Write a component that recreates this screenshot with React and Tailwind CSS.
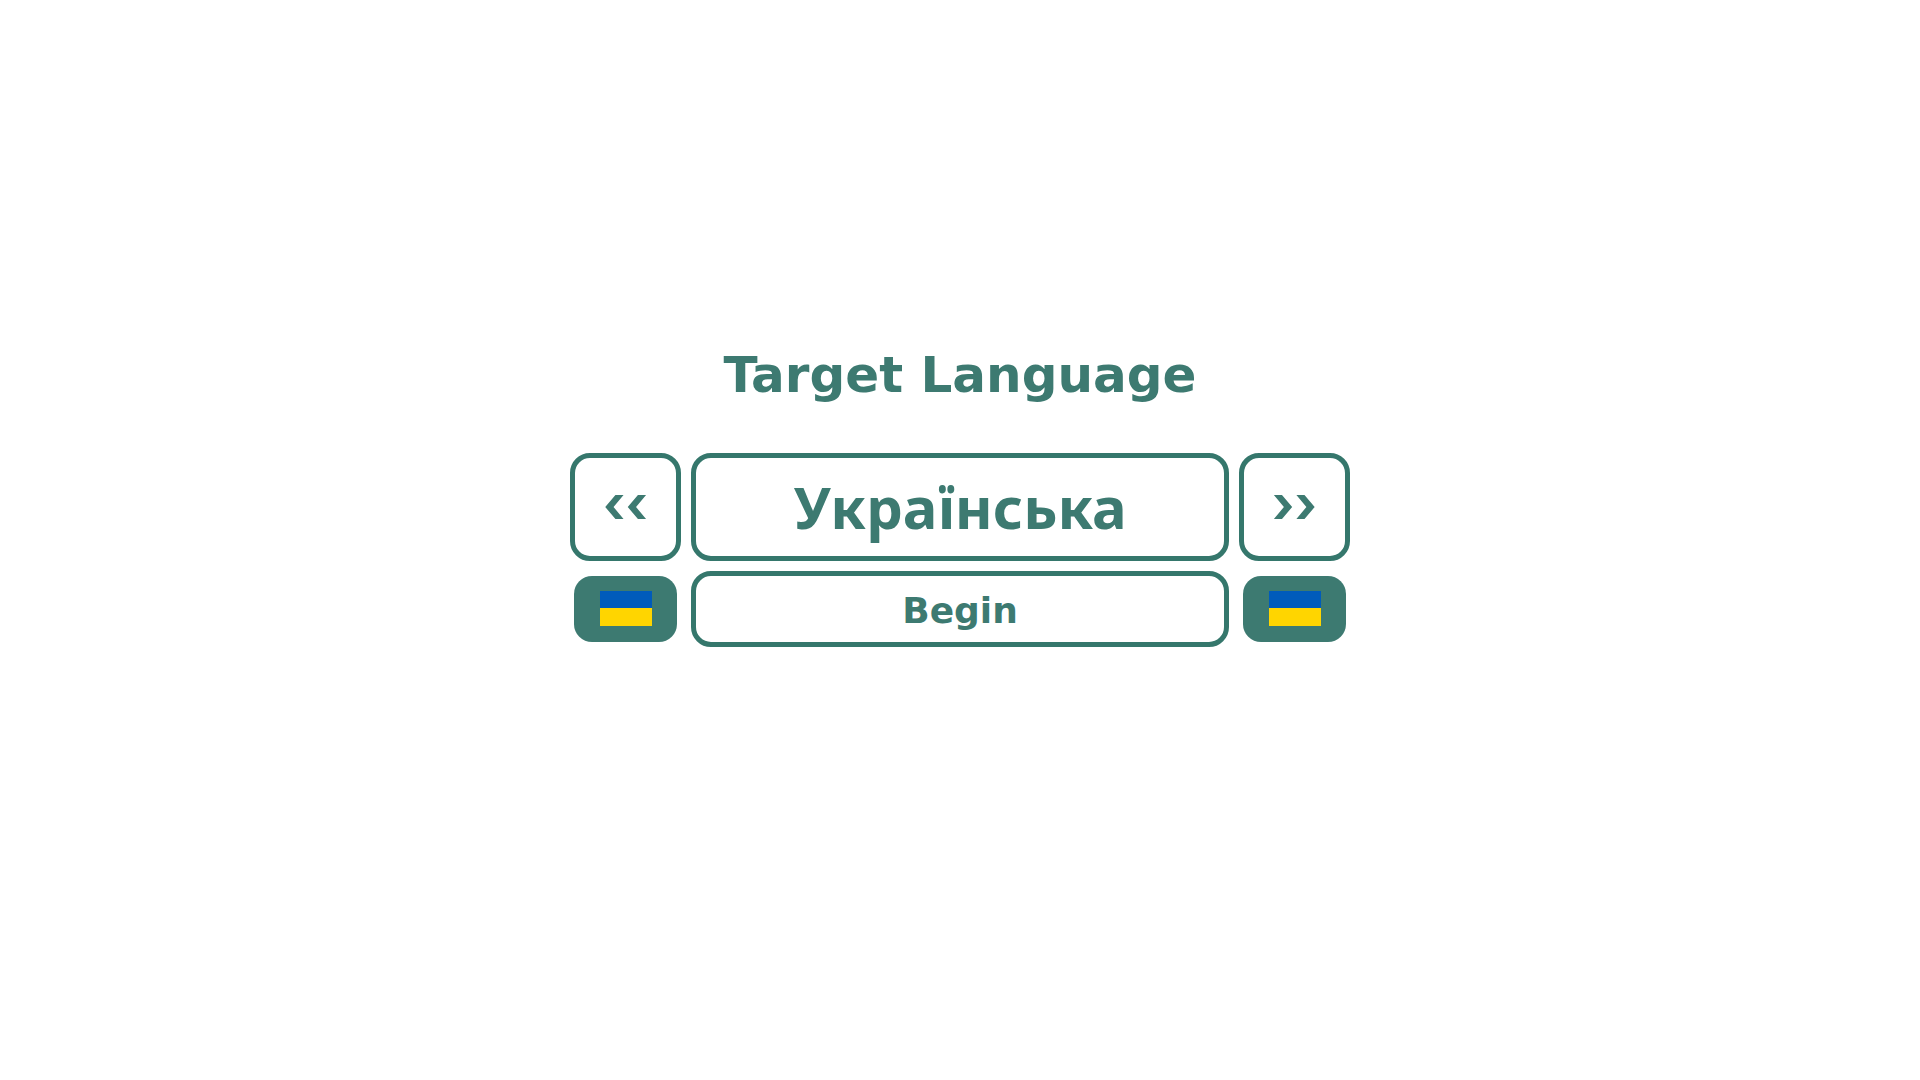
const box =
  "flex items-center justify-center rounded-[20px] border-[5px] border-[#35776c] bg-white text-[#3d7a71]";

function Flag() {
  return (
    <div className="mx-1 my-[5px] flex items-center justify-center rounded-[18px] bg-[#3d7a71] pt-[15px] pb-4">
      <svg
        role="img"
        aria-label="Ukraine"
        viewBox="0 0 52 35"
        className="h-[35px] w-[52px]"
      >
        <rect width="52" height="35" fill="#ffd500" />
        <rect width="52" height="17" fill="#005bbb" />
      </svg>
    </div>
  );
}

function Arrow({ label, children }) {
  return (
    <button
      type="button"
      aria-label={label}
      className={`${box} pb-1 font-['Inter',sans-serif] text-[52px] leading-none font-bold`}
    >
      {children}
    </button>
  );
}

export default function App() {
  return (
    <main className="flex min-h-screen flex-col items-center bg-white px-4 pt-[345px] font-['DejaVu_Sans',sans-serif] font-bold">
      <h1 className="text-center text-[50px] leading-[60px] text-[#3d7a71]">
        Target Language
      </h1>
      <section
        aria-label="Language selection"
        className="mt-12 grid w-full max-w-[780px] grid-cols-[111px_1fr_111px] gap-[10px]"
      >
        <Arrow label="Previous language">‹‹</Arrow>
        <div
          className={`${box} font-['Noto_Sans','Open_Sans',sans-serif] text-[58px] leading-[98px]`}
        >
          Українська
        </div>
        <Arrow label="Next language">››</Arrow>
        <Flag />
        <button type="button" className={`${box} pt-1 text-4xl leading-[62px] font-bold`}>
          Begin
        </button>
        <Flag />
      </section>
    </main>
  );
}
